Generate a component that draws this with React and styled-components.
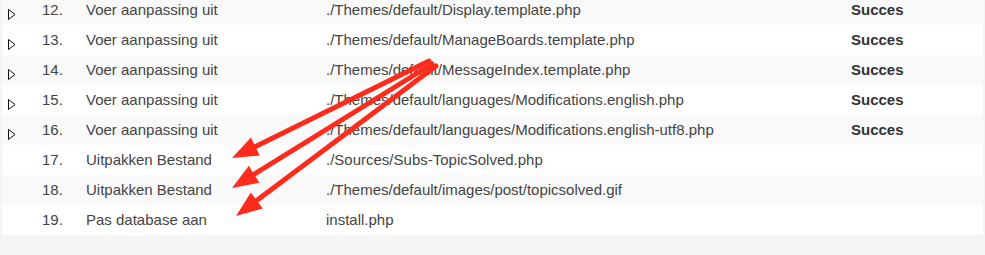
import React from 'react';
import styled, { createGlobalStyle } from 'styled-components';

const GlobalStyle = createGlobalStyle`
  body {
    margin: 0;
    background: #f5f5f5;
    font-family: 'Liberation Sans', Arial, sans-serif;
    overflow: hidden;
  }
`;

const Page = styled.div`
  position: relative;
  width: 985px;
  height: 255px;
  overflow: hidden;
`;

const Table = styled.div`
  margin: -5px 2px 0 2px;
  background: #fff;
`;

const Row = styled.div`
  display: grid;
  grid-template-columns: 34px 30px 260px 525px 1fr;
  align-items: center;
  box-sizing: border-box;
  height: 30px;
  padding-bottom: 2px;
  background: ${(p) => (p.$shaded ? '#f9f9f9' : '#ffffff')};
  color: #444;
  font-size: 15px;
`;

const Toggle = styled.div`
  align-self: stretch;
  display: flex;
  align-items: flex-end;
  padding: 0 0 3px 6px;
`;

const Num = styled.div`
  text-align: right;
  padding-right: 8px;
  margin-left: 6px;
`;

const Cell = styled.div`
  padding-left: ${(p) => p.$pad || 0}px;
  white-space: nowrap;
`;

const Status = styled.div`
  font-weight: bold;
  color: #333;
`;

const Overlay = styled.svg`
  position: absolute;
  left: 0;
  top: 0;
  pointer-events: none;
`;

const rows = [
  [12, 'Voer aanpassing uit', './Themes/default/Display.template.php', 'Succes'],
  [13, 'Voer aanpassing uit', './Themes/default/ManageBoards.template.php', 'Succes'],
  [14, 'Voer aanpassing uit', './Themes/default/MessageIndex.template.php', 'Succes'],
  [15, 'Voer aanpassing uit', './Themes/default/languages/Modifications.english.php', 'Succes'],
  [16, 'Voer aanpassing uit', './Themes/default/languages/Modifications.english-utf8.php', 'Succes'],
  [17, 'Uitpakken Bestand', './Sources/Subs-TopicSolved.php', ''],
  [18, 'Uitpakken Bestand', './Themes/default/images/post/topicsolved.gif', ''],
  [19, 'Pas database aan', 'install.php', ''],
];

const Triangle = () => (
  <svg width="8" height="11" viewBox="0 0 8 11">
    <path d="M0.5 0.5 L7 5.5 L0.5 10.5 Z" fill="none" stroke="#111" strokeWidth="1" />
  </svg>
);

// tail -> tip, head drawn as filled triangle
const arrows = [
  { from: [429, 61], to: [232, 158] },
  { from: [432, 64], to: [232, 188] },
  { from: [436, 66], to: [236, 216] },
];

const head = ({ from, to }) => {
  const dx = to[0] - from[0];
  const dy = to[1] - from[1];
  const len = Math.hypot(dx, dy);
  const ux = dx / len;
  const uy = dy / len;
  const bx = to[0] - ux * 26;
  const by = to[1] - uy * 26;
  const px = -uy * 10;
  const py = ux * 10;
  return {
    line: [from, [to[0] - ux * 20, to[1] - uy * 20]],
    pts: `${to[0]},${to[1]} ${bx + px},${by + py} ${bx - px},${by - py}`,
  };
};

const App = () => (
  <Page>
    <GlobalStyle />
    <Table>
      {rows.map(([n, desc, path, status]) => (
        <Row key={n} $shaded={n % 2 === 0}>
          <Toggle>{status && <Triangle />}</Toggle>
          <Num>{n}.</Num>
          <Cell $pad={20}>{desc}</Cell>
          <Cell>{path}</Cell>
          <Status>{status}</Status>
        </Row>
      ))}
    </Table>
    <Overlay width="985" height="255">
      {arrows.map((a, i) => {
        const h = head(a);
        return (
          <g key={i}>
            <line
              x1={h.line[0][0]}
              y1={h.line[0][1]}
              x2={h.line[1][0]}
              y2={h.line[1][1]}
              stroke="#ff2b1c"
              strokeWidth="5"
              strokeLinecap="round"
            />
            <polygon points={h.pts} fill="#ff2b1c" />
          </g>
        );
      })}
    </Overlay>
  </Page>
);

export default App;
